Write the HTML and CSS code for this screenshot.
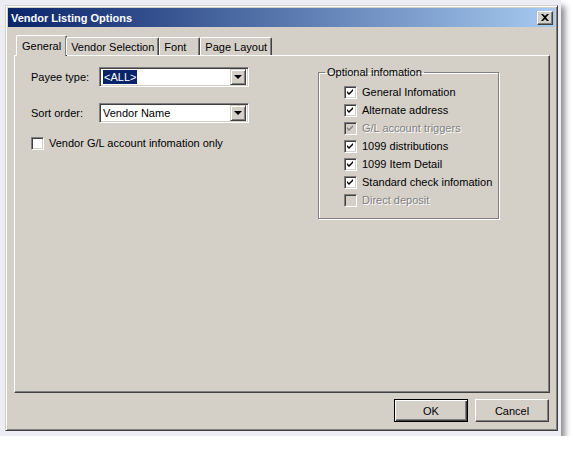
FILE: index.html
```
<!DOCTYPE html>
<html lang="en">
<head>
    <meta charset="UTF-8">
    <title>Vendor Listing Options</title>
    <link rel="stylesheet" href="styles.css">
</head>
<body>
    <div class="frame">
        <div class="window">
            <div class="titlebar">
                <span class="title">Vendor Listing Options</span>
                <button class="close" type="button">
                    <svg width="8" height="7" viewBox="0 0 8 7"><path d="M0 0h2l2 2 2-2h2L5 3.5 8 7H6L4 5 2 7H0l3-3.5z" fill="#000"/></svg>
                </button>
            </div>
            <div class="content">
                <!-- tabs -->
                <div class="tabs">
                    <div class="tab active">General</div>
                    <div class="tab">Vendor Selection</div>
                    <div class="tab">Font</div>
                    <div class="tab">Page Layout</div>
                </div>

                <div class="panel">
                    <div class="left-col">
                        <div class="field">
                            <label>Payee type:</label>
                            <div class="combo">
                                <span class="combo-text"><span class="selected">&lt;ALL&gt;</span></span>
                                <span class="combo-btn"><span class="arrow"></span></span>
                            </div>
                        </div>
                        <div class="field">
                            <label>Sort order:</label>
                            <div class="combo">
                                <span class="combo-text">Vendor Name</span>
                                <span class="combo-btn"><span class="arrow"></span></span>
                            </div>
                        </div>
                        <div class="check-row">
                            <span class="box"></span>
                            <span>Vendor G/L account infomation only</span>
                        </div>
                    </div>

                    <fieldset class="group">
                        <legend>Optional infomation</legend>
                        <div class="check-row"><span class="box checked"><svg width="9" height="9" viewBox="0 0 9 9"><path d="M1 3l2 2 4-4v2L3 7 1 5z"/></svg></span><span>General Infomation</span></div>
                        <div class="check-row"><span class="box checked"><svg width="9" height="9" viewBox="0 0 9 9"><path d="M1 3l2 2 4-4v2L3 7 1 5z"/></svg></span><span>Alternate address</span></div>
                        <div class="check-row disabled"><span class="box checked"><svg width="9" height="9" viewBox="0 0 9 9"><path d="M1 3l2 2 4-4v2L3 7 1 5z"/></svg></span><span>G/L account triggers</span></div>
                        <div class="check-row"><span class="box checked"><svg width="9" height="9" viewBox="0 0 9 9"><path d="M1 3l2 2 4-4v2L3 7 1 5z"/></svg></span><span>1099 distributions</span></div>
                        <div class="check-row"><span class="box checked"><svg width="9" height="9" viewBox="0 0 9 9"><path d="M1 3l2 2 4-4v2L3 7 1 5z"/></svg></span><span>1099 Item Detail</span></div>
                        <div class="check-row"><span class="box checked"><svg width="9" height="9" viewBox="0 0 9 9"><path d="M1 3l2 2 4-4v2L3 7 1 5z"/></svg></span><span>Standard check infomation</span></div>
                        <div class="check-row disabled"><span class="box"></span><span>Direct deposit</span></div>
                    </fieldset>
                </div>

                <div class="actions">
                    <button class="btn default" type="button">OK</button>
                    <button class="btn" type="button">Cancel</button>
                </div>
            </div>
        </div>
    </div>
</body>
</html>
```

FILE: styles.css
```
body {
    margin: 0;
    padding: 0;
    background: #ffffff;
    font-family: "Liberation Sans", Arial, sans-serif;
    font-size: 11px;
    color: #000;
}
.frame {
    width: 553px;
    padding: 5px 3px 5px 5px;
    background: #ececf4;
    box-shadow: 4px 6px 6px rgba(0, 0, 0, 0.45);
}
.window {
    width: 553px;
    height: 426px;
    box-sizing: border-box;
    background: #d4d0c8;
    border: 1px solid;
    border-color: #d4d0c8 #404040 #404040 #d4d0c8;
    box-shadow: inset 1px 1px #fff, inset -1px -1px #808080;
    padding: 2px;
    display: flex;
    flex-direction: column;
}
.titlebar {
    height: 19px;
    background: linear-gradient(to right, #0a246a, #a6caf0);
    display: flex;
    align-items: center;
    justify-content: space-between;
    padding: 0 2px 0 3px;
}
.title {
    color: #fff;
    font-weight: bold;
}
.close {
    width: 16px;
    height: 14px;
    padding: 0;
    background: #d4d0c8;
    border: 1px solid;
    border-color: #fff #404040 #404040 #fff;
    box-shadow: inset -1px -1px #808080;
    display: flex;
    align-items: center;
    justify-content: center;
}
.content {
    flex: 1;
    padding: 8px 5px 6px 6px;
    display: flex;
    flex-direction: column;
}
.tabs {
    display: flex;
    height: 20px;
    padding-left: 4px;
    align-items: flex-end;
    position: relative;
    z-index: 1;
}
.tab {
    height: 18px;
    box-sizing: border-box;
    padding: 2px 4px 0 4px;
    min-width: 41px;
    border-top: 1px solid #fff;
    border-left: 1px solid #fff;
    border-right: 1px solid #404040;
    box-shadow: inset -1px 0 #808080;
    border-radius: 2px 2px 0 0;
    line-height: 14px;
}
.tab.active {
    height: 21px;
    margin: 0 -1px -1px -2px;
    padding: 3px 5px 0 5px;
    background: #d4d0c8;
}
.panel {
    height: 338px;
    box-sizing: border-box;
    border: 1px solid;
    border-color: #fff #404040 #404040 #fff;
    box-shadow: inset -1px -1px #808080;
    padding: 11px 0 0 16px;
    display: flex;
    align-items: flex-start;
}
.left-col {
    width: 287px;
}
.field {
    display: flex;
    align-items: center;
    height: 20px;
    margin-bottom: 16px;
}
.field label {
    width: 68px;
}
.combo {
    width: 150px;
    height: 20px;
    box-sizing: border-box;
    background: #fff;
    border: 1px solid;
    border-color: #808080 #fff #fff #808080;
    box-shadow: inset 1px 1px #404040, inset -1px -1px #d4d0c8;
    display: flex;
    padding: 2px;
}
.combo-text {
    flex: 1;
    line-height: 14px;
    padding-left: 1px;
}
.selected {
    background: #0a246a;
    color: #fff;
    padding: 1px 1px;
}
.combo-btn {
    width: 16px;
    height: 16px;
    margin-top: -1px;
    box-sizing: border-box;
    background: #d4d0c8;
    border: 1px solid;
    border-color: #d4d0c8 #404040 #404040 #d4d0c8;
    box-shadow: inset 1px 1px #fff, inset -1px -1px #808080;
    display: flex;
    align-items: center;
    justify-content: center;
}
.arrow {
    width: 0;
    height: 0;
    border-left: 4px solid transparent;
    border-right: 4px solid transparent;
    border-top: 4px solid #000;
}
.check-row {
    display: flex;
    align-items: center;
    height: 18px;
}
.box {
    width: 13px;
    height: 13px;
    box-sizing: border-box;
    background: #fff;
    border: 1px solid;
    border-color: #808080 #fff #fff #808080;
    box-shadow: inset 1px 1px #404040, inset -1px -1px #d4d0c8;
    margin-right: 5px;
    display: flex;
    align-items: center;
    justify-content: center;
}
.box svg {
    fill: #000;
}
.check-row.disabled {
    color: #808080;
    text-shadow: 1px 1px #fff;
}
.check-row.disabled .box {
    background: #d4d0c8;
}
.check-row.disabled .box svg {
    fill: #808080;
}
.left-col .check-row {
    margin-top: -5px;
}
.group {
    margin: -1px 0 0 0;
    width: 181px;
    height: 153px;
    box-sizing: border-box;
    border: 1px solid #808080;
    box-shadow: 1px 1px #fff, inset 1px 1px #fff;
    padding: 5px 0 0 25px;
}
.group legend {
    padding: 0 2px;
    margin-left: -19px;
}
.actions {
    display: flex;
    justify-content: flex-end;
    gap: 7px;
    margin-top: 6px;
    padding-right: 1px;
}
.btn {
    width: 74px;
    height: 23px;
    font-family: "Liberation Sans", Arial, sans-serif;
    font-size: 11px;
    background: #d4d0c8;
    border: 1px solid;
    border-color: #fff #404040 #404040 #fff;
    box-shadow: inset -1px -1px #808080;
    padding: 0;
}
.btn.default {
    border-color: #000;
    box-shadow: inset 1px 1px #fff, inset -1px -1px #404040, inset -2px -2px #808080;
}
```
